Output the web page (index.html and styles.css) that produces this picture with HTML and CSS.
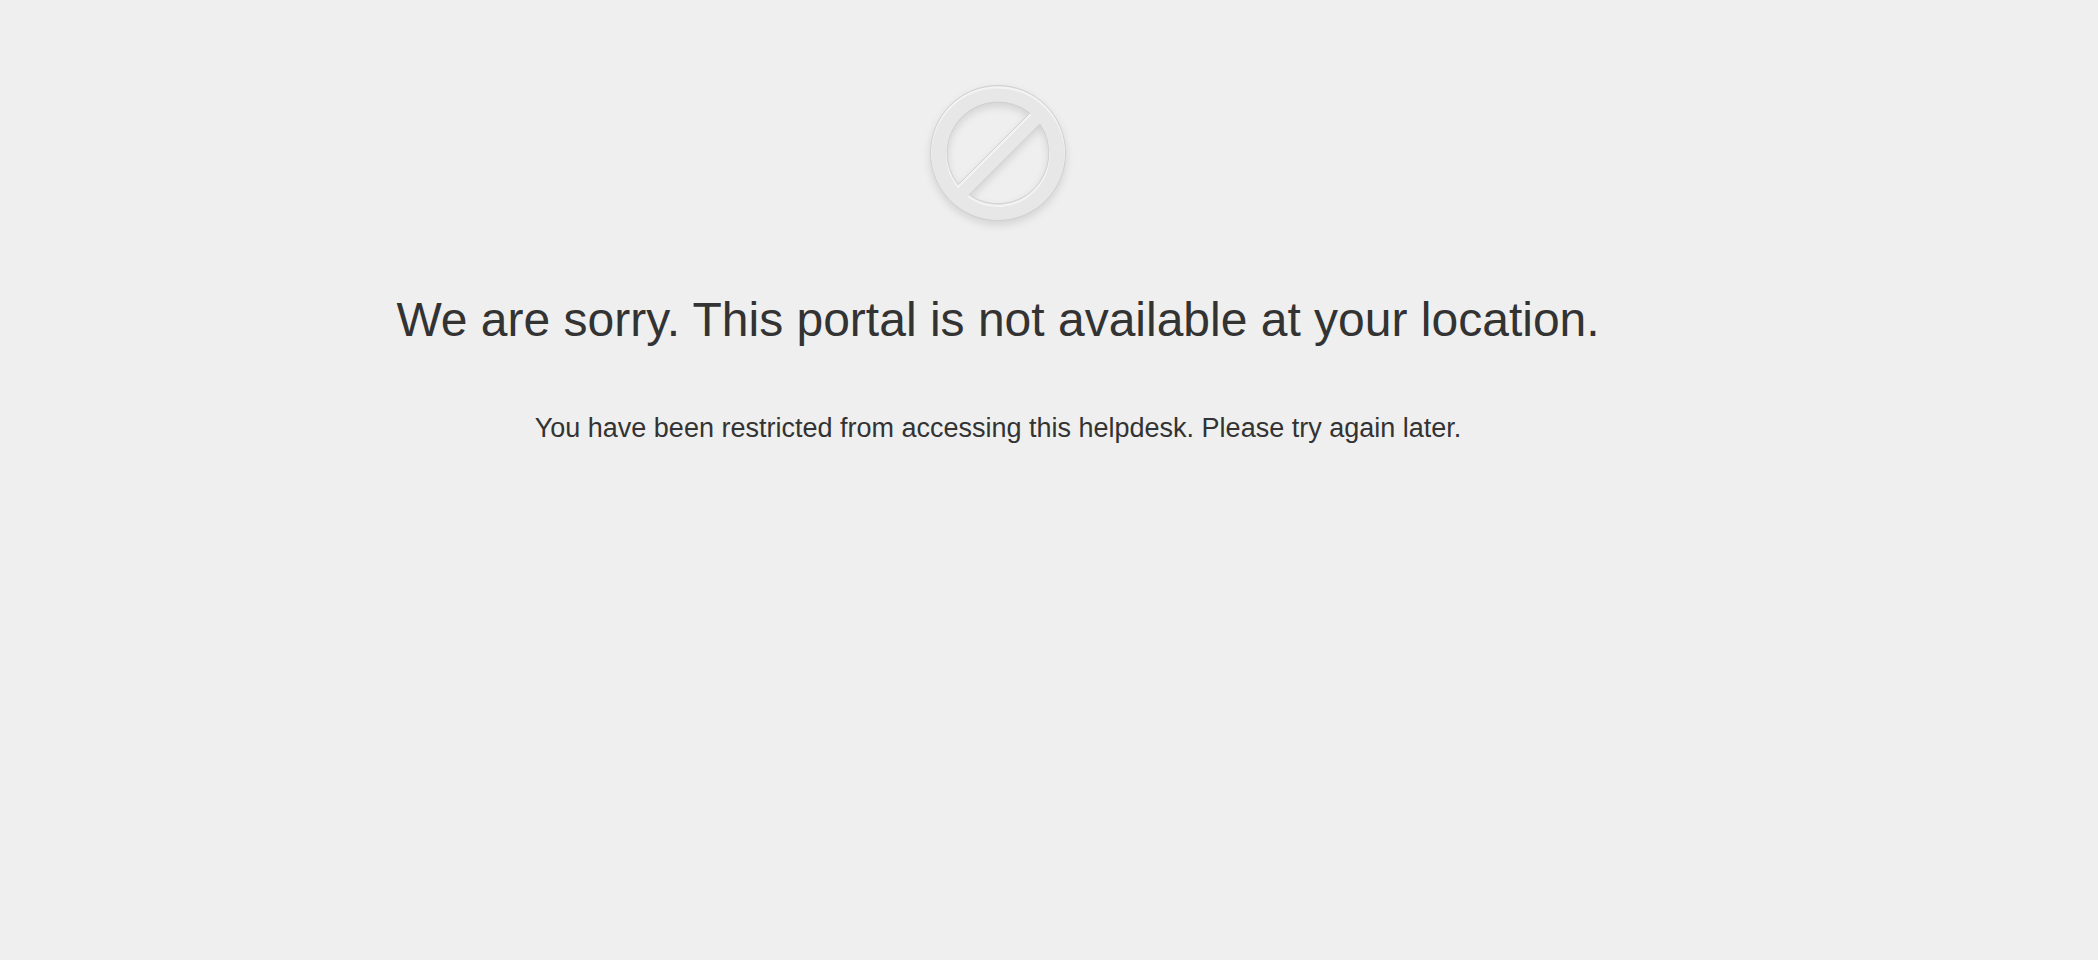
FILE: index.html
```
<!DOCTYPE html>
<html lang="en">
<head>
    <meta charset="UTF-8">
    <meta name="viewport" content="width=device-width, initial-scale=1.0">
    <title>Portal not available</title>
    <link rel="stylesheet" href="styles.css">
</head>
<body>
    <main class="container">
        <!-- No-entry sign -->
        <svg class="icon" viewBox="-80 -80 160 160" aria-hidden="true">
            <defs>
                <path id="sign" d="M-67.5 0A67.5 67.5 0 1 1 67.5 0A67.5 67.5 0 1 1 -67.5 0ZM31.8 -39.8A50.94 50.94 0 0 0 -39.8 31.8ZM41.9 -28.9L-28.9 41.9A50.9 50.9 0 0 0 41.9 -28.9Z"/>
                <clipPath id="sign-clip">
                    <use href="#sign" clip-rule="evenodd"/>
                </clipPath>
            </defs>
            <use class="icon-base" href="#sign"/>
            <g clip-path="url(#sign-clip)">
                <use class="icon-light" href="#sign" y="2"/>
            </g>
            <use class="icon-edge" href="#sign"/>
        </svg>

        <h1 class="title">We are sorry. This portal is not available at your location.</h1>
        <p class="message">You have been restricted from accessing this helpdesk. Please try again later.</p>
    </main>
</body>
</html>
```
FILE: styles.css
```
body {
    margin: 0;
    background-color: #efefef;
    color: #333;
    font-family: "Liberation Sans", Arial, sans-serif;
}

.container {
    display: flex;
    flex-direction: column;
    align-items: center;
    padding: 73px 102px 0 0;
    text-align: center;
}

/* No-entry sign */
.icon {
    width: 160px;
    height: 160px;
}

.icon-base {
    fill: #e7e7e7;
    fill-rule: evenodd;
    filter: drop-shadow(0 4px 4px rgba(0, 0, 0, 0.12));
}

.icon-light {
    fill: none;
    stroke: #f3f3f3;
    stroke-width: 2px;
}

.icon-edge {
    fill: none;
    stroke: #d0d0d0;
    stroke-width: 1px;
}

.title {
    margin: 57px 0 0;
    font-size: 48px;
    font-weight: normal;
    line-height: 60px;
}

.message {
    margin: 62px 0 0;
    font-size: 27px;
    line-height: 32px;
}
```
